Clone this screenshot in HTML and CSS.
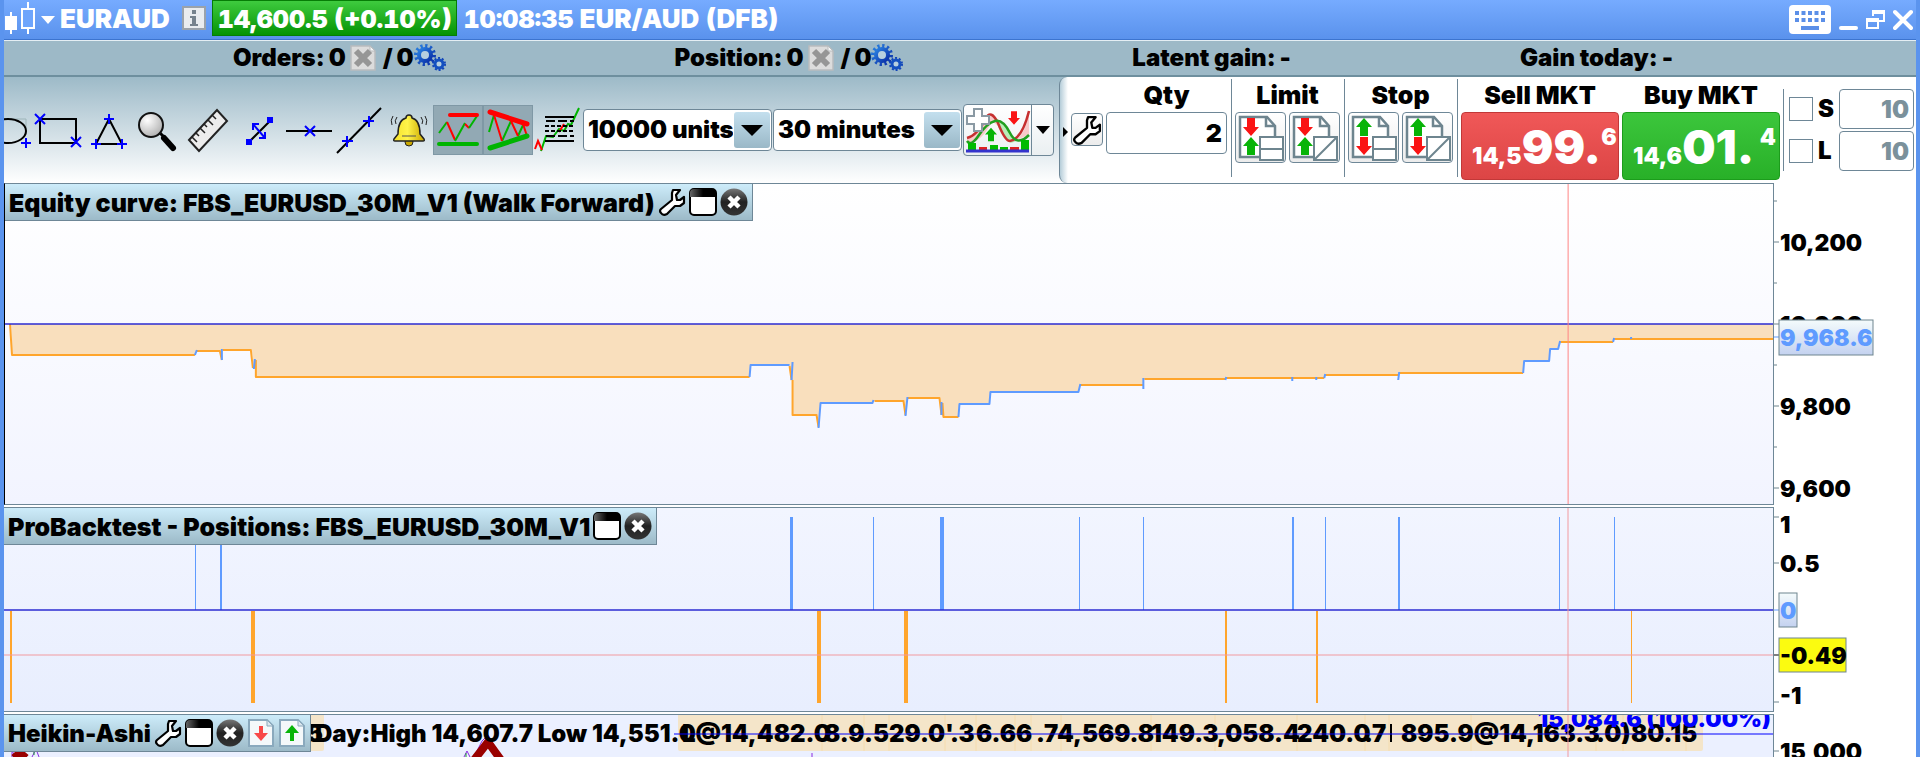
FILE: index.html
```
<!DOCTYPE html>
<html lang="en">
<head>
  <meta charset="UTF-8">
  <meta name="viewport" content="width=device-width, initial-scale=1.0">
  <title>EUR/AUD (DFB)</title>
  <link rel="stylesheet" href="styles.css">
</head>
<body>
<svg class="defs" width="0" height="0" aria-hidden="true">
  <defs>
    <linearGradient id="gear-fill" x1="0" y1="0" x2="1" y2="1">
      <stop offset="0" stop-color="#2a80e0"/><stop offset="1" stop-color="#0a2fa8"/>
    </linearGradient>
    <linearGradient id="dark-fill" x1="0" y1="0" x2="0" y2="1">
      <stop offset="0" stop-color="#777"/><stop offset="0.5" stop-color="#222"/><stop offset="1" stop-color="#333"/>
    </linearGradient>
    <linearGradient id="head-fill" x1="0" y1="0" x2="1" y2="0">
      <stop offset="0" stop-color="#666"/><stop offset="0.5" stop-color="#000"/>
    </linearGradient>
    <linearGradient id="tag-fill" x1="0" y1="0" x2="0" y2="1">
      <stop offset="0" stop-color="#f4fbfc"/><stop offset="1" stop-color="#c4d2f0"/>
    </linearGradient>
    <radialGradient id="lens-fill" cx="0.35" cy="0.3" r="0.8">
      <stop offset="0" stop-color="#fff"/><stop offset="1" stop-color="#aaa"/>
    </radialGradient>
    <linearGradient id="bell-fill" x1="0" y1="0" x2="1" y2="0">
      <stop offset="0" stop-color="#f5e22a"/><stop offset="0.45" stop-color="#fff34a"/><stop offset="1" stop-color="#c9a800"/>
    </linearGradient>
    <symbol id="i-gears" viewBox="0 0 32 28">
      <circle cx="11" cy="11" r="9" fill="none" stroke="url(#gear-fill)" stroke-width="4" stroke-dasharray="2.2 2.5"/>
      <circle cx="11" cy="11" r="6" fill="#b8cfdf" stroke="url(#gear-fill)" stroke-width="4"/>
      <circle cx="25" cy="20" r="6" fill="none" stroke="#1345b8" stroke-width="2" stroke-dasharray="2 1.8"/>
      <circle cx="25" cy="20" r="4" fill="#b8cfdf" stroke="#1550c0" stroke-width="3"/>
    </symbol>
    <symbol id="i-cancel" viewBox="0 0 26 26">
      <path d="M1 1h19l5 5v19H1z" fill="#dcdcdc" stroke="#b9bcbe" stroke-width="1.5"/>
      <path d="M20 1v5h5z" fill="#f5f5f5" stroke="#b9bcbe"/>
      <path d="M6 6l14 14M20 6L6 20" stroke="#969696" stroke-width="6"/>
    </symbol>
    <symbol id="i-wrench" viewBox="0 0 28 28">
      <path d="M15 2h7l-4 5 1 5h3l4-3v6l-4 3h-5L9 26q-4 2-6-1-2-2 0-4L14 12V5z" fill="#fff" stroke="#000" stroke-width="2.2" stroke-linejoin="round"/>
    </symbol>
    <symbol id="i-window" viewBox="0 0 28 28">
      <rect x="1" y="1" width="26" height="26" rx="4" fill="#fff" stroke="#000" stroke-width="2"/>
      <path d="M1 9V5q0-4 4-4h18q4 0 4 4v4z" fill="url(#head-fill)"/>
    </symbol>
    <symbol id="i-close" viewBox="0 0 28 28">
      <circle cx="14" cy="14" r="13.5" fill="url(#dark-fill)"/>
      <path d="M9 9l10 10M19 9L9 19" stroke="#fff" stroke-width="4.5"/>
    </symbol>
    <symbol id="a-down" viewBox="0 0 16 18">
      <path d="M4 0h8v9h4l-8 9-8-9h4z" fill="#fa1414"/>
    </symbol>
    <symbol id="a-up" viewBox="0 0 16 18">
      <path d="M8 0l8 9h-4v9H4V9H0z" fill="#08b408"/>
    </symbol>
    <symbol id="i-sheet" viewBox="0 0 26 28">
      <path d="M1 1h18l6 6v20H1z" fill="#f4f8fa" stroke="#8aa9bd" stroke-width="2"/>
      <path d="M19 1v6h6z" fill="#dbe7ee" stroke="#8aa9bd"/>
    </symbol>
    <symbol id="i-order" viewBox="0 0 46 46">
      <path d="M2 2h27l8 9v31H2z" fill="#fff" stroke="#6e858f" stroke-width="2.5"/>
      <path d="M28 2v9h9" fill="none" stroke="#6e858f" stroke-width="2.5"/>
    </symbol>
  </defs>
</svg>

<div class="window">
  <header class="title-bar">
    <svg class="candles" width="32" height="34" viewBox="0 0 32 34">
      <path d="M7 11v22M24 1v32" stroke="#fff" stroke-width="2"/>
      <rect x="1" y="15" width="12" height="14" fill="#fff"/>
      <rect x="18" y="8" width="12" height="19" fill="#6ea5fc" stroke="#fff" stroke-width="2"/>
    </svg>
    <button class="plain drop" aria-label="Choose instrument"><svg width="14" height="8"><path d="M0 0h14L7 8z" fill="#fff"/></svg></button>
    <h1>EURAUD</h1>
    <button class="plain info" aria-label="Information">
      <svg width="24" height="24"><rect x="1" y="1" width="22" height="22" fill="#e9ecef" stroke="#9aa2ab" stroke-width="2"/><path d="M8 10h6v8h2v2H8v-2h2v-6H8z" fill="#76828d"/><rect x="10" y="4" width="4" height="4" fill="#76828d"/></svg>
    </button>
    <span class="quote">14,600.5 (+0.10%)</span>
    <span class="clock">10:08:35</span>
    <span class="market">EUR/AUD (DFB)</span>
    <div class="window-buttons">
      <button class="plain" aria-label="Keyboard">
        <svg width="42" height="30"><rect width="42" height="29" rx="4" fill="#fff"/><path d="M6 8h30M6 15h30" stroke="#5b8fe8" stroke-width="4" stroke-dasharray="4 2.5"/><path d="M12 23h18" stroke="#5b8fe8" stroke-width="4"/></svg>
      </button>
      <button class="plain" aria-label="Minimise"><svg width="19" height="24"><path d="M2 20h15" stroke="#fff" stroke-width="4" stroke-linecap="round"/></svg></button>
      <button class="plain" aria-label="Restore"><svg width="19" height="24"><path d="M7 8V3h11v10h-5" fill="none" stroke="#fff" stroke-width="2"/><path d="M7 4h11M1 12h11" stroke="#fff" stroke-width="4"/><rect x="1" y="11" width="11" height="9" fill="none" stroke="#fff" stroke-width="2"/></svg></button>
      <button class="plain" aria-label="Close"><svg width="20" height="24"><path d="M2 4l16 16M18 4L2 20" stroke="#fff" stroke-width="4" stroke-linecap="round"/></svg></button>
    </div>
  </header>

  <div class="status-bar">
    <div class="status">
      <span>Orders:</span><span>0</span>
      <button class="plain" aria-label="Cancel orders"><svg width="26" height="26"><use href="#i-cancel"/></svg></button>
      <span class="slash">/</span><span>0</span>
      <svg class="gears" width="32" height="28"><use href="#i-gears"/></svg>
    </div>
    <div class="status">
      <span>Position:</span><span>0</span>
      <button class="plain" aria-label="Close position"><svg width="26" height="26"><use href="#i-cancel"/></svg></button>
      <span class="slash">/</span><span>0</span>
      <svg class="gears" width="32" height="28"><use href="#i-gears"/></svg>
    </div>
    <div class="status"><span>Latent gain:</span><span>-</span></div>
    <div class="status"><span>Gain today:</span><span>-</span></div>
  </div>

  <div class="toolbar">
    <div class="tools">
      <button class="plain" aria-label="Ellipse"><svg width="28" height="50"><path d="M0 14h22v14" fill="none" stroke="#9db4b8"/><ellipse cx="4" cy="26" rx="18" ry="12" fill="none" stroke="#000" stroke-width="2"/><path d="M17 38h10M22 33v10" stroke="#00f" stroke-width="2"/></svg></button>
      <button class="plain" aria-label="Rectangle"><svg width="54" height="50"><rect x="8" y="14" width="36" height="24" fill="none" stroke="#000" stroke-width="2"/><path d="M3 9l10 10M13 9L3 19M39 32l10 10M49 32L39 42" stroke="#00f" stroke-width="2"/></svg></button>
      <button class="plain" aria-label="Triangle"><svg width="48" height="50"><path d="M23 14L10 39h26z" fill="none" stroke="#000" stroke-width="2"/><path d="M18 14h10M23 9v10M5 39h10M10 34v10M31 39h10M36 34v10" stroke="#00f" stroke-width="2"/></svg></button>
      <button class="plain" aria-label="Zoom"><svg width="48" height="50"><path d="M26 28l4 4" stroke="#000" stroke-width="3"/><path d="M30 33l9 10" stroke="#000" stroke-width="6" stroke-linecap="round"/><circle cx="17" cy="20" r="12" fill="url(#lens-fill)" stroke="#111" stroke-width="2"/></svg></button>
      <button class="plain" aria-label="Ruler"><svg width="54" height="50"><path d="M7 35L35 5l10 11-28 30z" fill="#ececec" stroke="#222" stroke-width="2"/><path d="M10 32l5 5M14 28l3 3M18 23l5 5M22 19l3 3M26 15l5 5M30 10l4 4" stroke="#222" stroke-width="1.5"/></svg></button>
      <button class="plain" aria-label="Move line"><svg width="48" height="50" viewBox="-5 0 48 50"><path d="M8 37l22-22" stroke="#000" stroke-width="2"/><path d="M5 34h6v6H5zM26 12h6v6h-6z" fill="#00f"/><path d="M12 19l12 14M12 25v-6h6M24 27v6h-6" fill="none" stroke="#00f" stroke-width="2"/></svg></button>
      <button class="plain" aria-label="Horizontal line"><svg width="50" height="50"><path d="M2 26h46" stroke="#000" stroke-width="2"/><path d="M21 21l10 10M31 21L21 31" stroke="#00f" stroke-width="2"/></svg></button>
      <button class="plain" aria-label="Trend line"><svg width="50" height="50"><path d="M3 48L47 3" stroke="#000" stroke-width="2"/><path d="M8 36h11M13 31v11M29 16h11M35 11v11" stroke="#00f" stroke-width="2"/></svg></button>
      <button class="plain" aria-label="Alerts"><svg width="49" height="50" viewBox="-2 0 49 50"><path d="M7 11q-3 4-1 9M11 12q-3 4-1 7M39 11q3 4 1 9M35 12q3 4 1 7" fill="none" stroke="#222"/><ellipse cx="23" cy="37" rx="4" ry="4" fill="#c9a800" stroke="#222"/><path d="M23 10q3 0 3 3 8 2 8 16l4 5q1 2-1 2H9q-2 0-1-2l4-5q0-14 8-16 0-3 3-3z" fill="url(#bell-fill)" stroke="#222" stroke-width="1.5"/><path d="M16 31h14" stroke="#555"/></svg></button>
      <button class="plain toggle" aria-label="Support and resistance" aria-pressed="true"><svg width="48" height="48"><path d="M5 27l8-11" stroke="#00b400" stroke-width="2"/><path d="M13 16l8 18" stroke="red" stroke-width="2"/><path d="M21 35l10-18" stroke="#00b400" stroke-width="2"/><path d="M31 18l4 4" stroke="red" stroke-width="2"/><path d="M35 22l8-12" stroke="#00b400" stroke-width="2"/><path d="M16 9h27" stroke="red" stroke-width="4" stroke-linecap="round"/><path d="M5 38h38" stroke="#00b400" stroke-width="4" stroke-linecap="round"/></svg></button>
      <button class="plain toggle" aria-label="Trend channels" aria-pressed="true"><svg width="48" height="48"><path d="M5 26l5-17M18 35l9-20M34 30l6-13" stroke="#00b400" stroke-width="2"/><path d="M10 9l8 26M27 15l7 15M39 18l4 12" stroke="red" stroke-width="2"/><path d="M6 6l37 12" stroke="red" stroke-width="5" stroke-linecap="round"/><path d="M6 42l37-12" stroke="#00b400" stroke-width="5" stroke-linecap="round"/></svg></button>
      <button class="plain" aria-label="Fibonacci"><svg width="50" height="50"><path d="M8 46l5-15 7 1 6-8 5 2 4-7 3 1 8-17" fill="none" stroke="#00b400" stroke-width="2"/><path d="M2 44l3-8 4 9M26 27l5-8" fill="none" stroke="red" stroke-width="2"/><path d="M12 12h29M12 36h29" stroke="#000" stroke-width="2"/><path d="M13 16h28M13 31h28" stroke="#000" stroke-width="2" stroke-dasharray="9 3"/><path d="M12 21h29M12 26h29" stroke="#000" stroke-width="2" stroke-dasharray="4 2"/></svg></button>

      <span class="select-box">
        <select aria-label="History"><option>10000 units</option></select>
        <svg class="arrow" width="36" height="36"><path d="M7 13h22L18 24z"/></svg>
      </span>
      <span class="select-box">
        <select aria-label="Timeframe"><option>30 minutes</option></select>
        <svg class="arrow" width="36" height="36"><path d="M7 13h22L18 24z"/></svg>
      </span>

      <div class="split">
        <button class="plain" aria-label="Indicators">
          <svg width="67" height="50"><path d="M3 33Q14 30 24 9q6-2 10 12l-6-5Q18 38 3 38zM50 36q12-6 15-30v24q-6 2-15 6z" fill="#f8caca"/><path d="M32 16q8 2 14 12 3 7 7 8l-6 2q-10-6-15-22z" fill="#b8ecb8"/><path d="M3 33Q14 30 22 13q5-9 12 5 7 18 12 18 12-2 19-30" fill="none" stroke="#c63030" stroke-width="2.5"/><path d="M3 36q4 6 12-6t16-14 15 12 19 2" fill="none" stroke="#20a020" stroke-width="2.5"/><path d="M10 4h8v7h7v8h-7v7h-8v-7H3v-8h7z" fill="#fff" stroke="#8a99a3" stroke-width="2"/><path d="M4 45v-7h8v7zM26 45v-5h8v5zM36 45v-3h8v3zM57 45V35h8v10z" fill="#0b0"/><path d="M15 45v-3h8v3zM46 45v-3h9v3z" fill="#d22"/><path d="M2 46h63" stroke="#33c" stroke-width="3"/><use href="#a-down" x="44" y="5" width="12" height="16"/><use href="#a-up" x="21" y="22" width="12" height="15"/></svg>
        </button>
        <button class="plain more" aria-label="More indicators"><svg width="14" height="8"><path d="M0 0h14L7 8z"/></svg></button>
      </div>
    </div>

    <form class="order-panel">
      <button type="button" class="plain fold" aria-label="Fold panel"><svg width="5" height="10"><path d="M0 0v10l5-5z"/></svg></button>
      <button type="button" class="framed settings" aria-label="Order settings"><svg width="30" height="30"><use href="#i-wrench"/></svg></button>
      <div class="group">
        <label for="qty">Qty</label>
        <input id="qty" type="text" value="2">
      </div>
      <div class="group ruled">
        <span>Limit</span>
        <div class="pair">
          <button type="button" class="framed" aria-label="Limit order"><svg width="46" height="46"><use href="#i-order"/><path d="M22 22h23v23H22zM22 34h23" fill="#fff" stroke="#6e858f" stroke-width="2"/><use href="#a-down" x="5" y="3" width="16" height="18"/><use href="#a-up" x="5" y="22" width="16" height="18"/></svg></button>
          <button type="button" class="framed" aria-label="Limit line"><svg width="46" height="46"><use href="#i-order"/><path d="M22 22h23v23H22zM22 45l23-23" fill="#fff" stroke="#6e858f" stroke-width="2"/><use href="#a-down" x="5" y="3" width="16" height="18"/><use href="#a-up" x="5" y="22" width="16" height="18"/></svg></button>
        </div>
      </div>
      <div class="group ruled">
        <span>Stop</span>
        <div class="pair">
          <button type="button" class="framed" aria-label="Stop order"><svg width="46" height="46"><use href="#i-order"/><path d="M22 22h23v23H22zM22 34h23" fill="#fff" stroke="#6e858f" stroke-width="2"/><use href="#a-up" x="5" y="3" width="16" height="18"/><use href="#a-down" x="5" y="22" width="16" height="18"/></svg></button>
          <button type="button" class="framed" aria-label="Stop line"><svg width="46" height="46"><use href="#i-order"/><path d="M22 22h23v23H22zM22 45l23-23" fill="#fff" stroke="#6e858f" stroke-width="2"/><use href="#a-up" x="5" y="3" width="16" height="18"/><use href="#a-down" x="5" y="22" width="16" height="18"/></svg></button>
        </div>
      </div>
      <div class="group ruled">
        <span>Sell MKT</span>
        <button type="button" class="price sell"><span>14,5</span><b>99.</b><sup>6</sup></button>
      </div>
      <div class="group buy-group">
        <span>Buy MKT</span>
        <button type="button" class="price buy"><span>14,6</span><b>01.</b><sup>4</sup></button>
      </div>
      <div class="protect">
        <input type="checkbox" id="use-s"><label for="use-s">S</label><input type="text" value="10" aria-label="Stop distance">
        <input type="checkbox" id="use-l"><label for="use-l">L</label><input type="text" value="10" aria-label="Limit distance">
      </div>
    </form>
  </div>

  <main class="charts">
    <section class="pane equity">
      <div class="plot">
        <svg class="graph" viewBox="4 184 1769 320" preserveAspectRatio="none">
          <path d="M10 324L11 355H194L195 351H220L221 360V350H251L253 369L255 360V377H749L750 365H789L791 380L792 362V415H817L818 428L820 403H872L873 401H904L905 416L907 398H939L941 415L943 417H958L959 404H989L990 392H1078L1080 385H1143V379H1225V378H1324V375H1398V373H1523L1524 361H1549L1550 349H1558L1559 342H1613V339H1773V324z" fill="#f9dfbd"/>
          <g fill="none" stroke-width="2" stroke-linejoin="round">
            <path stroke="#ffa52c" d="M9 324L11 355H194M196 351H219L221 360M222 350H250L252 368M255 360V377H749M789 366L791 380M792 380V415H816L818 427M874 401H903L905 415M907 398H939L941 415M942 403L943 417H958M1080 385H1143M1144 379H1225M1226 378H1324M1325 375H1398M1399 373H1523M1560 342H1613M1614 339H1773"/>
            <path stroke="#5f9bff" d="M194 355L196 350M221 360V349M253 369L254 359M749 377L750 365H789M791 380L792 362M818 428L820 403H872L873 400M905 416L907 397M941 415V402M958 417L959 404H989L990 392H1078L1080 384M1143 389V378M1225 380L1226 377M1292 381V377M1316 380V377M1324 378L1325 374M1398 380L1399 372M1523 373L1524 361H1549L1550 349H1558L1560 341M1613 342L1614 338M1630 338H1632"/>
          </g>
          <path d="M4 324h1769" stroke="#2b2bd2" stroke-width="1.5"/>
          <path d="M1568 184v320" stroke="#ff8585"/>
        </svg>
        <div class="tab">
          <h2>Equity curve: FBS_EURUSD_30M_V1 (Walk Forward)</h2>
          <button class="plain" aria-label="Settings"><svg width="28" height="28"><use href="#i-wrench"/></svg></button>
          <button class="plain" aria-label="Maximise"><svg width="28" height="28"><use href="#i-window"/></svg></button>
          <button class="plain" aria-label="Close"><svg width="28" height="28"><use href="#i-close"/></svg></button>
        </div>
      </div>
      <svg class="axis" width="142" viewBox="1774 183 142 322">
        <path d="M1774 242h5M1774 201h3M1774 283h3M1774 324h5M1774 365h3M1774 406h5M1774 447h3M1774 488h5" stroke="#6e858f"/>
        <text x="1780" y="251">10,200</text>
        <text x="1780" y="333">10,000</text>
        <text x="1780" y="415">9,800</text>
        <text x="1780" y="497">9,600</text>
        <path d="M1774 337h5" stroke="#5f9bff"/>
        <rect x="1779" y="320" width="94" height="35" fill="url(#tag-fill)" stroke="#6e858f"/>
        <text class="last" x="1780" y="346">9,968.6</text>
      </svg>
    </section>

    <section class="pane positions">
      <div class="plot">
        <svg class="graph" viewBox="4 508 1769 203" preserveAspectRatio="none">
          <path d="M195 517h1v93h-1zM220 517h2v93h-2zM790 517h3v93h-3zM873 517h1v93h-1zM940 517h4v93h-4zM1079 517h1v93h-1zM1143 517h1v93h-1zM1292 517h2v93h-2zM1325 517h1v93h-1zM1398 517h2v93h-2zM1559 517h1v93h-1zM1614 517h1v93h-1z" fill="#5f9bff"/>
          <path d="M10 611h2v92h-2zM251 611h4v92h-4zM817 611h4v92h-4zM904 611h4v92h-4zM1225 611h2v92h-2zM1316 611h2v92h-2zM1631 611h1v92h-1z" fill="#ffa52c"/>
          <path d="M4 610h1769" stroke="#2b2bd2" stroke-width="1.5"/>
          <path d="M1568 508v203M4 655h1769" stroke="#f29a9f"/>
        </svg>
        <div class="tab">
          <h2>ProBacktest - Positions: FBS_EURUSD_30M_V1</h2>
          <button class="plain" aria-label="Maximise"><svg width="28" height="28"><use href="#i-window"/></svg></button>
          <button class="plain" aria-label="Close"><svg width="28" height="28"><use href="#i-close"/></svg></button>
        </div>
      </div>
      <svg class="axis" width="142" viewBox="1774 507 142 205">
        <path d="M1774 517h5M1774 563h5M1774 702h5" stroke="#6e858f"/>
        <path d="M1774 610h5" stroke="#5f9bff"/>
        <path d="M1774 655h5" stroke="#000"/>
        <text x="1780" y="533">1</text>
        <text x="1780" y="572">0.5</text>
        <rect x="1779" y="593" width="18" height="34" fill="url(#tag-fill)" stroke="#6e858f"/>
        <text class="last" x="1780" y="619">0</text>
        <rect x="1779" y="638" width="67" height="34" fill="#fbfb10" stroke="#6e858f"/>
        <text x="1780" y="664">-0.49</text>
        <text x="1780" y="704">-1</text>
      </svg>
    </section>

    <section class="pane heikin">
      <div class="plot">
        <svg class="graph" viewBox="4 715 1769 42" preserveAspectRatio="xMinYMin slice">
          <path d="M308 715h16v34q0 2-2 2h-14zM678 715h1025v34q0 2-2 2H680q-2 0-2-2z" fill="#f4e5c9"/>
          <path d="M822 715v36M864 715v36M889 715v36M945 715v36M976 715v36M1015 715v36M1031 715v36M1061 715v36M1151 715v36M1215 715v36M1297 715v36M1365 715v36M1389 715v36M1471 715v36M1596 715v36M1623 715v36M1686 715v36" stroke="#f5dcae"/>
          <path d="M474 757l8-16 6-6 6 10 8 12M464 757l3-6 3 6M12 757v-6l4 6M32 757l4-8 3 8M812 753v4" fill="none" stroke="#8a2be2"/>
          <path d="M34 750v5M466 753v4" stroke="#1a9a30"/>
          <path d="M474 760l14-18 13 18M14 758l6-5 6 5" fill="none" stroke="#900" stroke-width="8" stroke-linejoin="round"/>
          <g class="notes">
            <text x="307" y="742">5</text>
            <text x="315" y="742">Day:High 14,607.7 Low 14,551.0</text>
            <text x="682" y="742">L@14,482.0</text>
            <text x="824" y="742">8.9</text>
            <text x="864" y="742">.5</text>
            <text x="889" y="742">29.0</text>
            <text x="945" y="742">'</text>
            <text x="950" y="742">.3</text>
            <text x="976" y="742">6.66</text>
            <text x="1036" y="742">.7</text>
            <text x="1057" y="742">4,569.8</text>
            <text x="1151" y="742">149.3</text>
            <text x="1217" y="742">,058.4</text>
            <text x="1297" y="742">240.0</text>
            <text x="1364" y="742">.7</text>
            <path d="M1391 724v18" stroke="#000" stroke-width="2"/>
            <text x="1401" y="742">895.9@14,163.3</text>
            <text x="1596" y="742">.0)</text>
            <text x="1631" y="742">80.15</text>
          </g>
          <path d="M674 734h1099" stroke="#00f"/>
          <text class="level" x="1771" y="727" text-anchor="end">15,084.6 (100.00%)</text>
          <path d="M1568 715v42" stroke="#f29a9f"/>
        </svg>
        <div class="tab">
          <h2>Heikin-Ashi</h2>
          <button class="plain" aria-label="Settings"><svg width="28" height="28"><use href="#i-wrench"/></svg></button>
          <button class="plain" aria-label="Maximise"><svg width="28" height="28"><use href="#i-window"/></svg></button>
          <button class="plain" aria-label="Close"><svg width="28" height="28"><use href="#i-close"/></svg></button>
          <button class="plain" aria-label="Sell"><svg width="28" height="28"><use href="#i-sheet"/><path d="M12 7h4v7h5l-7 8-7-8h5z" fill="#f84848"/></svg></button>
          <button class="plain" aria-label="Buy"><svg width="28" height="28"><use href="#i-sheet"/><path d="M14 6l7 8h-5v8h-4v-8H7z" fill="#08b408"/></svg></button>
        </div>
      </div>
      <svg class="axis" width="142" height="43" viewBox="1774 714 142 43">
        <path d="M1774 751h5" stroke="#6e858f"/>
        <text x="1780" y="760">15,000</text>
      </svg>
    </section>
  </main>
</div>
</body>
</html>
```
FILE: styles.css
```
* {
  box-sizing: border-box;
}

body {
  margin: 0;
  font-family: Inter, "Liberation Sans", sans-serif;
  font-size: 24px;
  font-weight: 900;
  line-height: 28px;
  color: #000;
}

button, input, select {
  font: inherit;
  color: inherit;
}

svg {
  display: block;
}

.defs {
  position: absolute;
}

.plain {
  display: flex;
  align-items: center;
  justify-content: center;
  padding: 0;
  border: 0;
  background: none;
  cursor: pointer;
}

.window {
  display: flex;
  flex-direction: column;
  height: 100vh;
  overflow: hidden;
  border: solid #5b94ee;
  border-width: 0 4px;
}

/* title bar */
.title-bar {
  display: flex;
  align-items: flex-start;
  height: 40px;
  padding-top: 5px;
  background: linear-gradient(#76abff, #5a92ec);
  border-bottom: 1px solid #3c74cf;
  color: #fff;
  font-size: 25px;
  font-feature-settings: "tnum";
  white-space: nowrap;
}

.candles {
  margin-top: -4px;
}

.drop {
  height: 30px;
  margin: 0 5px;
}

.title-bar h1 {
  margin: 0;
  font-size: 26px;
  font-weight: 900;
  line-height: 28px;
}

.info {
  margin: 1px 6px 0 12px;
}

.quote {
  height: 36px;
  margin: -5px 6px 0 0;
  padding: 4px 5px 0;
  background: linear-gradient(#3ecb3e, #059305);
  border: 1px solid #067d06;
}

.clock {
  margin-right: 6px;
}

.market {
  font-size: 26px;
}

.window-buttons {
  display: flex;
  gap: 8px;
  margin-left: auto;
  padding-right: 3px;
}

/* orders and gains */
.status-bar {
  display: flex;
  justify-content: space-evenly;
  align-items: center;
  height: 37px;
  padding-right: 14px;
  background: #9db9c7;
  border-top: 1px solid #e4eef4;
  border-bottom: 2px solid #6e8f9e;
}

.status {
  display: flex;
  align-items: center;
  gap: 4px;
}

.slash {
  margin-left: 3px;
}

.gears {
  margin-left: -4px;
}

/* toolbar */
.toolbar {
  display: flex;
  height: 106px;
  background: linear-gradient(#9dbac8, #fff);
  flex-shrink: 0;
}

.tools {
  display: flex;
  align-items: center;
  flex: 1;
}

.toggle {
  background: #92a9b4;
  border: 1px solid #7f98a5;
  height: 50px;
  width: 50px;
}

.select-box {
  position: relative;
  margin-right: 1px;
}

.select-box select {
  appearance: none;
  width: 189px;
  height: 42px;
  padding: 0 38px 0 4px;
  background: #fff;
  border: 1px solid #6e8797;
  border-radius: 4px;
}

.select-box .arrow {
  position: absolute;
  top: 3px;
  right: 2px;
  background: linear-gradient(#c3dfee, #9ab8c7);
  border-radius: 3px;
  pointer-events: none;
}

.split {
  display: flex;
  height: 52px;
  background: linear-gradient(#fff, #eaeff1);
  border: 1px solid #6e8797;
  border-radius: 4px;
}

.more {
  width: 22px;
  border-left: 1px solid #6e8797;
}

.order-panel {
  display: flex;
  align-items: flex-start;
  width: 857px;
  height: 106px;
  padding: 2px 2px 0 0;
  background: linear-gradient(90deg, #b5cdd9, #fff 8px);
  border-left: 1px solid #6e8797;
  border-radius: 8px 0 0 8px;
}

.fold {
  width: 12px;
  height: 105px;
}

.framed {
  display: flex;
  align-items: center;
  justify-content: center;
  width: 51px;
  height: 51px;
  padding: 0;
  background: linear-gradient(#fff, #ececec);
  border: 1px solid #6e8797;
  border-radius: 4px;
}

.settings {
  width: 33px;
  height: 33px;
  margin: 34px 3px 0 0;
}

.group {
  display: flex;
  flex-direction: column;
  align-items: center;
  gap: 3px;
  padding: 2px 0 0;
  font-size: 25px;
}

.group input,
.protect input[type="text"] {
  width: 121px;
  height: 42px;
  padding: 0 4px;
  text-align: right;
  background: #fff;
  border: 1px solid #6e8797;
  border-radius: 4px;
}

.ruled {
  margin-left: 4px;
  padding-left: 3px;
  border-left: 1px solid #6e8797;
  height: 98px;
}

.pair {
  display: flex;
  gap: 3px;
}

.buy-group {
  margin: 0 3px;
}

.price {
  display: flex;
  align-items: baseline;
  width: 158px;
  height: 68px;
  padding: 4px 3px 0 10px;
  border-radius: 4px;
  color: #fff;
  font-size: 23px;
  line-height: 60px;
}

.price b {
  font-size: 47px;
  font-weight: 900;
}

.price sup {
  align-self: flex-start;
  margin-left: auto;
  padding-top: 20px;
  font-size: 23px;
  line-height: 0;
}

.sell {
  background: linear-gradient(#f05858, #dc4545);
  border: 1px solid #c13838;
}

.buy {
  background: linear-gradient(#3cc63c, #28b028);
  border: 1px solid #1c9c1c;
}

.protect {
  display: grid;
  grid-template-columns: 24px 16px 75px;
  column-gap: 5px;
  row-gap: 2px;
  align-items: center;
  margin-top: 10px;
  padding-left: 5px;
  border-left: 1px solid #6e8797;
}

.protect input[type="checkbox"] {
  appearance: none;
  width: 24px;
  height: 24px;
  margin: 0;
  background: #fff;
  border: 1px solid #6e8797;
}

.protect input[type="text"] {
  width: 75px;
  height: 40px;
  color: #7b919b;
}

/* chart panes */
.charts {
  display: flex;
  flex-direction: column;
  gap: 2px;
  flex: 1;
  min-height: 0;
}

.pane {
  display: flex;
  flex-shrink: 0;
}

.plot {
  position: relative;
  flex: 1;
  border: solid #6e8797;
  border-width: 1px 1px 1px 0;
}

.graph {
  width: 100%;
  height: 100%;
}

.equity {
  height: 322px;
}

.equity .plot {
  background: linear-gradient(#fff, #f2f4ff);
  border-left: 1px solid #000;
}

.positions {
  height: 205px;
}

.positions .plot {
  background: linear-gradient(#f2f5ff, #e8eefe);
}

.heikin {
  height: 43px;
  overflow: hidden;
}

.heikin .plot {
  background: #ebf0ff;
  border-bottom: 0;
}

.tab {
  position: absolute;
  top: 0;
  left: 0;
  display: flex;
  align-items: center;
  gap: 3px;
  height: 37px;
  padding: 0 4px;
  background: linear-gradient(#cdecfa, #9cbac8);
  border: solid #6e8797;
  border-width: 0 1px 1px 0;
  white-space: nowrap;
}

.tab h2 {
  margin: 0;
  padding-top: 1px;
  font-size: 25px;
  font-weight: 900;
}

.heikin .tab h2 {
  font-size: 24px;
}

.axis {
  flex: none;
  font-size: 23px;
}

.axis .last {
  fill: #5f9bff;
}

.level {
  fill: #00f;
  font-size: 23px;
}
```
